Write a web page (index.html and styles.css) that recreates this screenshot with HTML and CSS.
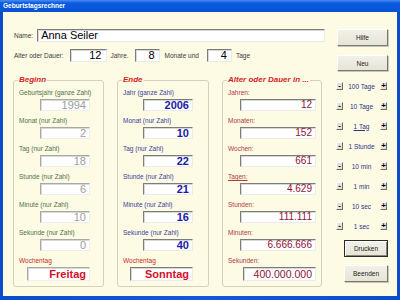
FILE: index.html
```html
<!DOCTYPE html>
<html lang="de">
<head>
<meta charset="utf-8">
<title>Geburtstagsrechner</title>
<link rel="stylesheet" href="styles.css">
</head>
<body>
<div class="window">
  <div class="titlebar">Geburtstagsrechner</div>
  <div class="client">
    <div class="main">
      <div class="row name-row">
        <span class="lbl">Name:</span>
        <div class="field name-field">Anna Seiler</div>
      </div>
      <div class="row age-row">
        <span class="lbl">Alter oder Dauer:</span>
        <div class="field num w-years">12</div>
        <span class="lbl">Jahre.</span>
        <div class="field num w-small">8</div>
        <span class="lbl">Monate und</span>
        <div class="field num w-small">4</div>
        <span class="lbl">Tage</span>
      </div>
      <div class="groups">
        <fieldset class="group begin">
          <legend>Beginn</legend>
          <div class="item"><span class="cap">Geburtsjahr (ganze Zahl)</span><div class="field">1994</div></div>
          <div class="item"><span class="cap">Monat (nur Zahl)</span><div class="field">2</div></div>
          <div class="item"><span class="cap">Tag (nur Zahl)</span><div class="field">18</div></div>
          <div class="item"><span class="cap">Stunde (nur Zahl)</span><div class="field">6</div></div>
          <div class="item"><span class="cap">Minute (nur Zahl)</span><div class="field">10</div></div>
          <div class="item"><span class="cap">Sekunde (nur Zahl)</span><div class="field">0</div></div>
          <div class="item day"><span class="cap">Wochentag</span><div class="field">Freitag</div></div>
        </fieldset>
        <fieldset class="group end">
          <legend>Ende</legend>
          <div class="item"><span class="cap">Jahr (ganze Zahl)</span><div class="field">2006</div></div>
          <div class="item"><span class="cap">Monat (nur Zahl)</span><div class="field">10</div></div>
          <div class="item"><span class="cap">Tag (nur Zahl)</span><div class="field">22</div></div>
          <div class="item"><span class="cap">Stunde (nur Zahl)</span><div class="field">21</div></div>
          <div class="item"><span class="cap">Minute (nur Zahl)</span><div class="field">16</div></div>
          <div class="item"><span class="cap">Sekunde (nur Zahl)</span><div class="field">40</div></div>
          <div class="item day"><span class="cap">Wochentag</span><div class="field">Sonntag</div></div>
        </fieldset>
        <fieldset class="group age">
          <legend>Alter oder Dauer in ...</legend>
          <div class="item"><span class="cap">Jahren:</span><div class="field">12</div></div>
          <div class="item"><span class="cap">Monaten:</span><div class="field">152</div></div>
          <div class="item"><span class="cap">Wochen:</span><div class="field">661</div></div>
          <div class="item"><span class="cap u">Tagen:</span><div class="field">4.629</div></div>
          <div class="item"><span class="cap">Stunden:</span><div class="field">111.111</div></div>
          <div class="item"><span class="cap">Minuten:</span><div class="field">6.666.666</div></div>
          <div class="item secs"><span class="cap">Sekunden:</span><div class="field">400.000.000</div></div>
        </fieldset>
      </div>
    </div>
    <div class="side">
      <div class="btn wide">Hilfe</div>
      <div class="btn wide neu">Neu</div>
      <div class="steps">
        <div class="step"><span class="sbtn">-</span><span class="slbl">100 Tage</span><span class="sbtn">+</span></div>
        <div class="step"><span class="sbtn">-</span><span class="slbl">10 Tage</span><span class="sbtn">+</span></div>
        <div class="step"><span class="sbtn">-</span><span class="slbl u">1 Tag</span><span class="sbtn">+</span></div>
        <div class="step"><span class="sbtn">-</span><span class="slbl">1 Stunde</span><span class="sbtn">+</span></div>
        <div class="step"><span class="sbtn">-</span><span class="slbl">10 min</span><span class="sbtn">+</span></div>
        <div class="step"><span class="sbtn">-</span><span class="slbl">1 min</span><span class="sbtn">+</span></div>
        <div class="step"><span class="sbtn">-</span><span class="slbl">10 sec</span><span class="sbtn">+</span></div>
        <div class="step"><span class="sbtn">-</span><span class="slbl">1 sec</span><span class="sbtn">+</span></div>
      </div>
      <div class="btn narrow default">Drucken</div>
      <div class="btn narrow last">Beenden</div>
    </div>
  </div>
</div>
</body>
</html>
```
FILE: styles.css
```css
* { box-sizing: border-box; }
html, body { margin: 0; padding: 0; }
body {
  width: 400px;
  height: 300px;
  overflow: hidden;
  font-family: "Liberation Sans", Arial, sans-serif;
  background: #0f52d6;
}
.window {
  width: 400px;
  height: 300px;
  display: flex;
  flex-direction: column;
  background: linear-gradient(90deg, #0b4ccc, #1457dc 50%, #0b4ccc);
}
.titlebar {
  flex: none;
  height: 12px;
  padding-left: 3px;
  color: #fff;
  font-size: 6.5px;
  font-weight: bold;
  line-height: 12px;
  background: linear-gradient(#4a8ef2, #0b5ae0 25%, #0756dc 70%, #0b50d0);
}
.client {
  flex: 1;
  margin: 0 3px 4px 3px;
  padding: 17px 9px 0 10px;
  display: flex;
  gap: 11px;
  background: #fdfbe4;
}
.main {
  width: 312px;
  display: flex;
  flex-direction: column;
}
.row {
  display: flex;
  align-items: center;
  height: 13px;
}
.lbl {
  font-size: 6.5px;
  color: #3a3a3a;
  white-space: nowrap;
}
.field {
  background: #fff;
  border: 1px solid;
  border-color: #7c7c7c #ebebeb #ebebeb #7c7c7c;
  box-shadow: inset 1px 1px 0 #d8d8d8;
  white-space: nowrap;
  overflow: hidden;
}
.name-row { gap: 4px; padding-left: 1px; }
.name-field {
  flex: 1;
  height: 13px;
  padding-left: 3px;
  font-size: 11px;
  line-height: 11px;
  color: #000;
}
.age-row { margin-top: 7px; }
.age-row .lbl:first-child { margin: 0 6px 0 1px; }
.age-row .field {
  height: 13px;
  padding-right: 4px;
  font-size: 11px;
  line-height: 11px;
  text-align: right;
  color: #000;
}
.age-row .w-years { width: 37px; margin-right: 4px; }
.age-row .w-small { width: 25px; margin: 0 5px 0 6px; }
.age-row .w-small:last-of-type { margin-left: 8px; margin-right: 4px; }

.groups {
  display: flex;
  gap: 13px;
  margin-top: 13px;
}
.group {
  margin: 0;
  min-width: 0;
  height: 212px;
  padding: 4px 0 5px 5px;
  border: 1px solid #d2d1c0;
  border-radius: 3px;
  display: flex;
  flex-direction: column;
  gap: 6px;
}
.group legend {
  padding: 0 1px;
  margin-left: -1px;
  font-size: 8px;
  line-height: 10px;
  font-weight: bold;
  font-style: italic;
  color: #d4241c;
}
.group.begin { width: 91px; }
.group.end { width: 92px; }
.group.age { width: 100px; }
.item {
  display: flex;
  flex-direction: column;
  gap: 2px;
}
.cap {
  height: 8px;
  font-size: 6.5px;
  line-height: 8px;
  white-space: nowrap;
}
.u { text-decoration: underline; }
.item .field {
  height: 12px;
  padding-right: 3px;
  font-size: 11px;
  line-height: 10px;
  text-align: right;
}
.begin .cap { color: #4f7048; }
.begin .field { margin-left: 21px; width: 50px; color: #9c9c9c; border-color: #a8a8a8 #eeeeee #eeeeee #a8a8a8; }
.end .cap { color: #3c3c9c; }
.end .field { margin-left: 20px; width: 50px; color: #1a1aa8; font-weight: bold; }
.age .cap { color: #b03a3a; }
.age .field { margin-left: 12px; width: 76px; color: #8c1436; font-size: 10px; }
.item.day .cap { color: #c42c24; }
.item.day .field {
  height: 14px;
  line-height: 12px;
  width: 63px;
  color: #d4102a;
  font-weight: bold;
}
.begin .item.day .field { margin-left: 8px; }
.end .item.day .field { margin-left: 7px; }
.item.secs .field {
  height: 14px;
  line-height: 12px;
  margin-left: 15px;
  width: 73px;
  font-size: 10.5px;
}

.side {
  width: 52px;
  display: flex;
  flex-direction: column;
}
.btn {
  height: 17px;
  display: flex;
  align-items: center;
  justify-content: center;
  font-size: 6.5px;
  color: #222;
  background: linear-gradient(#f2f1e8, #e6e4d6);
  border: 1px solid;
  border-color: #ffffff #7b7a70 #7b7a70 #ffffff;
  box-shadow: 1px 1px 0 #c8c6b8;
}
.btn.wide { width: 51px; margin-left: 1px; }
.btn.neu { margin-top: 9px; height: 16px; }
.btn.narrow { width: 44px; margin-left: 8px; }
.btn.default { margin-top: 4px; border-color: #2a2a2a; box-shadow: inset 1px 1px 0 #fff, inset -1px -1px 0 #8a887c; }
.btn.last { margin-top: 8px; }
.steps {
  margin-top: 5px;
  display: flex;
  flex-direction: column;
}
.step {
  width: 51px;
  height: 20px;
  display: flex;
  align-items: center;
  justify-content: space-between;
}
.sbtn {
  width: 7px;
  height: 8px;
  display: flex;
  align-items: center;
  justify-content: center;
  font-size: 8px;
  font-weight: bold;
  line-height: 8px;
  color: #000;
  background: #e4e2d4;
  border: 1px solid;
  border-color: #ffffff #6e6d64 #6e6d64 #ffffff;
}
.slbl {
  font-size: 6.5px;
  color: #303088;
}
```
